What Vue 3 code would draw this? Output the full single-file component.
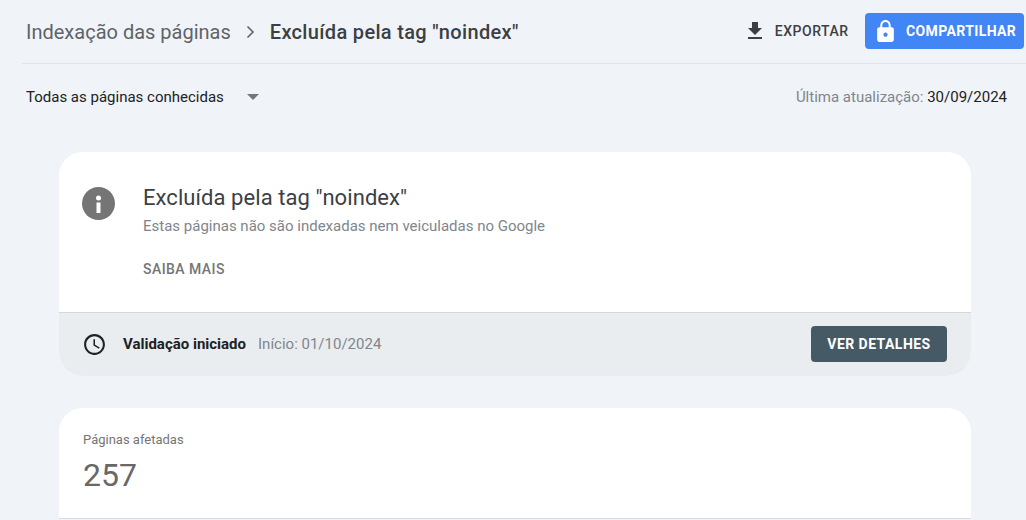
<template>
  <div class="page">
    <header class="topbar">
      <div class="crumbs">
        <span class="crumb">Indexação das páginas</span>
        <svg class="chev" viewBox="0 0 24 24" fill="none" stroke="#5f6368" stroke-width="1.6"><path d="M8.5 6.5 14 12l-5.500 5.500" /></svg>
        <span class="crumb current">Excluída pela tag "noindex"</span>
      </div>
      <div class="actions">
        <button class="export">
          <svg viewBox="0 0 24 24" fill="#3c4043"><path d="M19 9h-4V3H9v6H5l7 7 7-7zM5 18v2h14v-2H5z" /></svg>
          <span>EXPORTAR</span>
        </button>
        <button class="share">
          <svg viewBox="0 0 24 24" fill="#fff"><path d="M18 8h-1V6c0-2.76-2.24-5-5-5S7 3.24 7 6v2H6c-1.100 0-2 .9-2 2v10c0 1.100.9 2 2 2h12c1.100 0 2-.9 2-2V10c0-1.100-.9-2-2-2zm-6 9c-1.100 0-2-.9-2-2s.9-2 2-2 2 .9 2 2-.9 2-2 2zm3.100-9H8.900V6c0-1.710 1.390-3.100 3.100-3.100s3.100 1.390 3.100 3.100v2z" /></svg>
          <span>COMPARTILHAR</span>
        </button>
      </div>
    </header>

    <div class="filterbar">
      <div class="filter">
        <span>Todas as páginas conhecidas</span>
        <i class="caret"></i>
      </div>
      <div class="updated">Última atualização: <span>30/09/2024</span></div>
    </div>

    <main class="content">
      <section class="card">
        <div class="info">
          <svg class="info-icon" viewBox="0 0 33 33">
            <circle cx="16.500" cy="16.500" r="16.500" fill="#757575" />
            <rect x="14.500" y="15.500" width="4" height="10.500" fill="#fff" />
            <circle cx="16.500" cy="11" r="2.500" fill="#fff" />
          </svg>
          <div class="info-text">
            <h1>Excluída pela tag "noindex"</h1>
            <p>Estas páginas não são indexadas nem veiculadas no Google</p>
            <a class="more">SAIBA MAIS</a>
          </div>
        </div>
        <div class="validation">
          <svg class="clock" viewBox="0 0 24 24" fill="#202124"><path d="M11.990 2C6.470 2 2 6.480 2 12s4.470 10 9.990 10C17.520 22 22 17.520 22 12S17.520 2 11.990 2zM12 20c-4.420 0-8-3.580-8-8s3.580-8 8-8 8 3.580 8 8-3.580 8-8 8zm.5-13H11v6l5.250 3.150.75-1.230-4.500-2.670z" /></svg>
          <span class="val-title">Validação iniciado</span>
          <span class="val-date">Início: 01/10/2024</span>
          <button class="details">VER DETALHES</button>
        </div>
      </section>

      <section class="card stats">
        <div class="stats-label">Páginas afetadas</div>
        <div class="stats-value">257</div>
        <div class="stats-line"></div>
      </section>
    </main>
  </div>
</template>

<script setup>
</script>

<style>
html, body { margin: 0; background: #f0f4f9; }
body { height: 520px; overflow: hidden; }
</style>

<style scoped>
.page {
  font-family: Roboto, "Liberation Sans", sans-serif;
  color: #202124;
  background: #f0f4f9;
  height: 520px;
  overflow: hidden;
}
.topbar {
  display: flex;
  align-items: center;
  justify-content: space-between;
  height: 62px;
  margin-left: 22px;
  padding: 0 2px 1px 4px;
  border-bottom: 1px solid #e0e3e7;
}
.crumbs { display: flex; align-items: center; font-size: 20px; margin-top: 1px; }
.crumb { color: #5f6368; }
.crumb.current { color: #3c4043; font-weight: 500; letter-spacing: 0.33px; }
.chev { width: 24px; height: 24px; margin: 0 7px 0 8px; }
.actions { display: flex; align-items: center; }
button { font-family: inherit; border: 0; cursor: pointer; }
.export {
  display: flex;
  align-items: center;
  gap: 8px;
  background: none;
  padding: 0;
  color: #3c4043;
  font-size: 14px;
  font-weight: 500;
  letter-spacing: 0.5px;
}
.export svg { width: 24px; height: 24px; }
.share {
  display: flex;
  align-items: center;
  gap: 7px;
  box-sizing: border-box;
  width: 159px;
  height: 36px;
  margin-left: 16.500px;
  padding: 0 0 0 9px;
  border-radius: 4px;
  background: #4285f4;
  color: #fff;
  font-size: 14px;
  font-weight: 700;
  letter-spacing: 0.38px;
}
.share svg { width: 25px; height: 25px; margin-left: -1px; margin-right: 1px; }
.filterbar {
  display: flex;
  align-items: center;
  justify-content: space-between;
  height: 66px;
  padding: 0 19px 0 26px;
}
.filter { display: flex; align-items: center; font-size: 15px; color: #202124; }
.caret {
  width: 0;
  height: 0;
  margin-left: 23px;
  border-left: 6px solid transparent;
  border-right: 6px solid transparent;
  border-top: 6px solid #757575;
}
.updated { font-size: 15px; color: #80868b; }
.updated span { color: #202124; }
.content { padding: 22px 55px 0 59px; }
.card {
  background: #fff;
  border-radius: 24px;
  overflow: hidden;
}
.info { display: flex; padding: 35px 24px 0 23px; height: 125px; }
.info-icon { width: 33px; height: 33px; flex-shrink: 0; margin-right: 28px; }
.info-text h1 { margin: 0; font-size: 22px; font-weight: 400; line-height: 22px; color: #3c4043; letter-spacing: 0.07px; }
.info-text p { margin: 7px 0 0; font-size: 15px; line-height: 20px; color: #80868b; }
.more {
  display: block;
  margin-top: 25px;
  font-size: 14px;
  font-weight: 500;
  line-height: 16px;
  letter-spacing: 0.45px;
  color: #757575;
}
.validation {
  display: flex;
  align-items: center;
  box-sizing: border-box;
  height: 64px;
  padding: 0 24px 1px 23px;
  background: #eaedf0;
  border-top: 1px solid #d5d7da;
}
.clock { width: 25px; height: 25px; margin-right: 16px; }
.val-title { font-size: 15px; font-weight: 700; color: #202124; }
.val-date { margin-left: 12px; font-size: 15px; color: #80868b; }
.details {
  margin-left: auto;
  width: 136px;
  height: 36px;
  border-radius: 4px;
  background: #455a64;
  color: #fff;
  font-size: 14px;
  font-weight: 700;
  letter-spacing: 0.45px;
}
.stats { margin-top: 32px; border-radius: 24px 24px 0 0; }
.stats-label { padding: 24px 24px 0; font-size: 13px; line-height: 16px; color: #757575; }
.stats-value { padding: 0 24px; margin-top: 7px; font-size: 32px; line-height: 40px; color: #686868; }
.stats-line { margin-top: 23px; height: 1px; background: #dadce0; }
</style>
